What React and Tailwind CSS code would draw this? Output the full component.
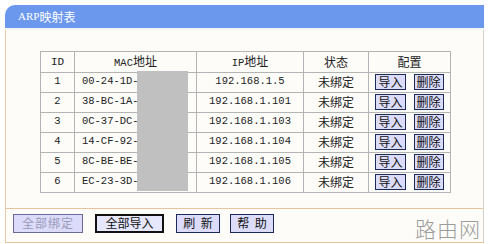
const rows = [
  { id: 1, mac: '00-24-1D-', ip: '192.168.1.5' },
  { id: 2, mac: '38-BC-1A-', ip: '192.168.1.101' },
  { id: 3, mac: '0C-37-DC-', ip: '192.168.1.103' },
  { id: 4, mac: '14-CF-92-', ip: '192.168.1.104' },
  { id: 5, mac: '8C-BE-BE-', ip: '192.168.1.105' },
  { id: 6, mac: 'EC-23-3D-', ip: '192.168.1.106' },
]

const cjk = "font-['Noto_Sans_CJK_SC',sans-serif]"
const mono = "font-['Liberation_Mono','Noto_Sans_CJK_SC',monospace]"

function SmallBtn({ children }) {
  return (
    <span
      className={`inline-flex h-[16px] items-center justify-center border border-[#1c2a5a] bg-[#dcdcfa] px-[2px] text-[12px] leading-none text-[#111] ${cjk}`}
    >
      {children}
    </span>
  )
}

function BarBtn({ children, className = '' }) {
  return (
    <span
      className={`flex h-[19px] items-center justify-center whitespace-pre border text-[12px] leading-none ${cjk} ${className}`}
    >
      {children}
    </span>
  )
}

export default function App() {
  return (
    <div className="h-[244px] w-[488px] bg-white pl-[5px] pt-[5px]">
      <div className="w-[479px]">
        <div className={`flex h-[23px] items-center rounded-tl-[10px] bg-[#6b97ec] pl-[13px] text-[12px] text-white ${cjk}`}>
          <span className="font-['Liberation_Serif','Noto_Sans_CJK_SC',serif] text-[11px]">ARP</span>
          <span>映射表</span>
        </div>
        <div className="h-[2px] bg-[#f4f4f4]" />
        <div className="border-l border-r border-l-[#ecc8a4] border-r-[#d8d0c8] bg-[#fdfcf8]">
          <div className="relative px-[34px] pb-[15px] pt-[21px]">
            <table className="w-[411px] border-collapse border border-[#8a8a8a] text-[#222]">
              <thead>
                <tr className="h-[20px]">
                  <th className={`w-[34px] border border-[#b4b4b4] text-[11px] font-normal ${mono}`}>ID</th>
                  <th className={`w-[122px] border border-[#b4b4b4] text-[12px] font-normal ${cjk}`}>
                    <span className="font-['Liberation_Mono',monospace] text-[10.5px]">MAC</span>地址
                  </th>
                  <th className={`w-[107px] border border-[#b4b4b4] text-[12px] font-normal ${cjk}`}>
                    <span className="font-['Liberation_Mono',monospace] text-[10.5px]">IP</span>地址
                  </th>
                  <th className={`w-[65px] border border-[#b4b4b4] text-[12px] font-normal ${cjk}`}>状态</th>
                  <th className={`border border-[#b4b4b4] text-[12px] font-normal ${cjk}`}>配置</th>
                </tr>
              </thead>
              <tbody>
                {rows.map((r) => (
                  <tr key={r.id} className="h-[20px]">
                    <td className={`border border-[#b4b4b4] text-center text-[10.5px] ${mono}`}>{r.id}</td>
                    <td className={`whitespace-pre border border-[#b4b4b4] text-center text-[10.5px] ${mono}`}>
                      {r.mac + '        '}
                    </td>
                    <td className={`border border-[#b4b4b4] text-center text-[10.5px] ${mono}`}>{r.ip}</td>
                    <td className={`border border-[#b4b4b4] text-center text-[12px] ${cjk}`}>未绑定</td>
                    <td className="border border-[#b4b4b4]">
                      <div className="flex items-center justify-center gap-[8px]">
                        <SmallBtn>导入</SmallBtn>
                        <SmallBtn>删除</SmallBtn>
                      </div>
                    </td>
                  </tr>
                ))}
              </tbody>
            </table>
            {/* redaction box over the MAC column */}
            <div className="absolute left-[131px] top-[41px] h-[120px] w-[51px] bg-[#c0c0c0]" />
          </div>
          <div className="h-px bg-[#e6c4a0]" />
          <div className="flex h-[33px] items-start gap-[12px] pl-[7px] pt-[5px]">
            <BarBtn className="w-[70px] border-[#6a6a9a] bg-[#dcdcfa] tracking-[1px] text-[#9a9ab8]">全部绑定</BarBtn>
            <BarBtn className="w-[69px] border-2 border-[#111] bg-[#e6e6fc] text-[#111]">全部导入</BarBtn>
            <BarBtn className="w-[44px] border-[#1c2a5a] bg-[#dcdcfa] text-[#111]">{'刷  新'}</BarBtn>
            <BarBtn className="ml-[-2px] w-[44px] border-[#1c2a5a] bg-[#dcdcfa] text-[#111]">{'帮  助'}</BarBtn>
            <span className={`ml-auto mr-[2px] mt-[4px] text-[21px] font-light leading-none tracking-[1px] text-[#9c9c9c] ${cjk}`}>路由网</span>
          </div>
        </div>
        <div className="h-px bg-[#e6c4a0]" />
      </div>
    </div>
  )
}
